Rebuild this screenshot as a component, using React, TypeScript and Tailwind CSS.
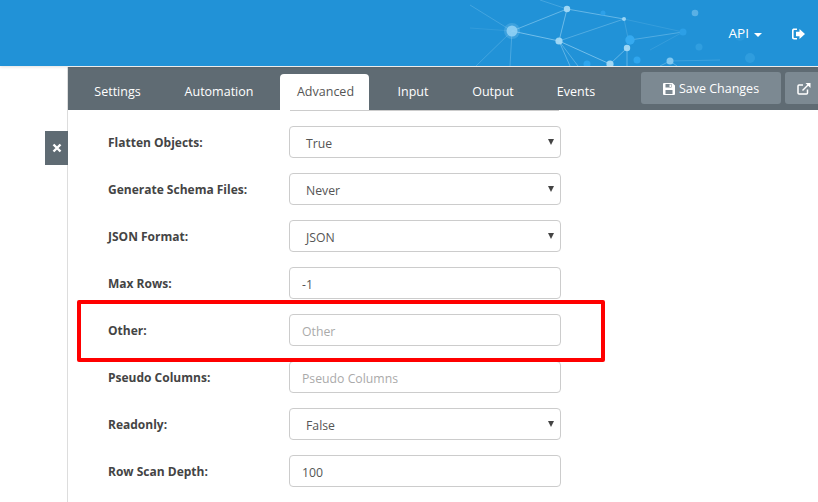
import React from "react";

const font = { fontFamily: '"Open Sans", "Noto Sans", sans-serif' };

function Network() {
  const nodes: [number, number, number, string, number][] = [
    [512, 31, 8, "#8fd0f5", 0.25], [512, 31, 5.5, "#8fd0f5", 0.9], [567, 9, 3.2, "#a5daf6", 0.95], [559, 41, 3.6, "#a5daf6", 0.95],
    [624, 19, 2, "#a5daf6", 0.9], [603, 13, 2.5, "#2fa2ea", 0.9], [683, 32, 3.5, "#2c9fe6", 1],
    [630, 40, 4.7, "#36aaf0", 1], [627, 48, 3.2, "#a5daf6", 0.95], [610, 64, 3.6, "#a5daf6", 0.95],
    [637, 60, 3.5, "#2fa6ee", 1], [670, 61, 3.5, "#8fd0f5", 0.85], [695, 13, 3.3, "#7fc4ee", 0.6],
    [699, 47, 3.5, "#3ea8e6", 0.55], [587, 64, 3.5, "#2fa6ee", 0.95], [750, 58, 5, "#3ea8e6", 0.5],
    [740, 36, 5, "#3ea8e6", 0.3],
  ];
  const lines: [number, number, number, number, number][] = [
    [512, 31, 567, 9, 0.5], [512, 31, 559, 41, 0.6], [567, 9, 559, 41, 0.55], [567, 9, 624, 19, 0.5],
    [559, 41, 624, 19, 0.35], [559, 41, 610, 64, 0.6], [559, 41, 570, 66, 0.45], [559, 41, 578, 66, 0.4],
    [512, 31, 510, 66, 0.3], [512, 31, 476, 66, 0.25], [512, 31, 470, 5, 0.25], [512, 31, 470, 28, 0.12],
    [624, 19, 683, 32, 0.15], [630, 40, 683, 32, 0.35], [627, 48, 610, 64, 0.5], [627, 48, 627, 66, 0.45],
    [624, 19, 628, 38, 0.2], [670, 61, 720, 60, 0.2], [670, 61, 660, 66, 0.35], [670, 61, 677, 66, 0.35],
    [683, 32, 650, 50, 0.15], [540, 0, 567, 9, 0.25],
  ];
  return (
    <svg width="818" height="66" viewBox="0 0 818 66" className="absolute inset-0">
      {lines.map(([a, b, c, d, o], i) => (
        <line key={i} x1={a} y1={b} x2={c} y2={d} stroke="#a8dcf8" strokeWidth="1" opacity={o} />
      ))}
      {nodes.map(([x, y, r, f, o], i) => (
        <circle key={i} cx={x} cy={y} r={r} fill={f} opacity={o} />
      ))}
    </svg>
  );
}

function Caret() {
  return <span className="absolute right-[6px] top-[12px] h-0 w-0 border-x-[3px] border-t-[6px] border-x-transparent border-t-[#444]" />;
}

function Row({ label, value, placeholder, select }: { label: string; value?: string; placeholder?: string; select?: boolean }) {
  return (
    <div className="flex h-[32px] items-center">
      <div className="w-[181px] pt-[2px] text-[12px] font-bold text-[#444]">{label}</div>
      <div className={`relative flex h-[32px] w-[272px] items-center rounded-[4px] border border-[#ccc] bg-white pt-[4px] text-[12.25px] ${select ? "pl-[16px]" : "pl-[12px]"} ${placeholder ? "text-[#aaa]" : "text-[#555]"}`}>
        {value ?? placeholder}
        {select && <Caret />}
      </div>
    </div>
  );
}

export default function App() {
  const tabs = [
    ["Settings", "w-[79px]"],
    ["Automation", "w-[100px]"],
    ["Advanced", "w-[89px]"],
    ["Input", "w-[62px]"],
    ["Output", "w-[74px]"],
    ["Events", "w-[68px]"],
  ];
  return (
    <div className="relative h-[502px] w-[818px] overflow-hidden bg-white" style={font}>
      <header className="relative flex h-[66px] items-center justify-end bg-[#2192d7] pr-[13px] text-white shadow-[0_1px_3px_rgba(0,0,0,0.12)]">
        <Network />
        <div className="relative flex items-center gap-[30px] pt-[1px]">
          <span className="flex items-center gap-[5px] text-[13.5px]">
            API
            <span className="mt-[2px] h-0 w-0 border-x-[4px] border-t-[4px] border-x-transparent border-t-white" />
          </span>
          <svg width="13" height="12" viewBox="0 0 13 12" fill="white">
            <path d="M0 2.2C0 1 1 .5 2 .5h3v1.6H2.3c-.5 0-.7.2-.7.7v6.4c0 .5.2.7.7.7H5v1.6H2c-1 0-2-.5-2-1.7z" />
            <path d="M4 3.8h3.5V1L13 6l-5.5 5V8.2H4z" />
          </svg>
        </div>
      </header>
      <div className="flex h-[436px] pt-px">
        <div className="flex w-[67px] shrink-0 justify-end pt-[64px]">
          <div className="-mr-px relative flex h-[34px] w-[23px] shrink-0 items-center justify-center bg-[#5f6b73]">
            <svg width="10" height="10" viewBox="0 0 10 10" stroke="white" strokeWidth="2.4">
              <path d="M1.5 1.5l7 7M8.5 1.5l-7 7" />
            </svg>
          </div>
        </div>
        <main className="min-w-0 flex-1 border-l border-[#ddd]">
          <div className="flex h-[43px] w-[750px] items-end justify-between bg-[#5f6b73] pl-[9px]">
            <nav className="flex h-[36px] gap-[12px] text-[12.5px] text-white">
              {tabs.map(([t, w]) => (
                <div
                  key={t}
                  className={`flex h-[36px] items-center justify-center pl-[2px] pt-[1px] ${w} ${t === "Advanced" ? "rounded-t-[4px] bg-white text-[#555]" : ""}`}
                >
                  {t}
                </div>
              ))}
            </nav>
            <div className="mb-[6px] flex w-[177px] shrink-0 gap-[4px] text-[12.5px] text-white">
              <div className="flex h-[32px] w-[140px] shrink-0 items-center justify-center gap-[4px] rounded-[3px] bg-[#7c8992] pt-[2px]">
                <svg width="12" height="12" viewBox="0 0 12 12" fill="white">
                  <path fillRule="evenodd" d="M1 0h8.5L12 2.5V11a1 1 0 0 1-1 1H1a1 1 0 0 1-1-1V1a1 1 0 0 1 1-1zm1.5 1v3.5h6V1zM2.5 7v4h7V7zM6.5 1.5H8v2.5H6.5z" />
                </svg>
                Save Changes
              </div>
              <div className="flex h-[32px] w-[40px] shrink-0 items-center rounded-[3px] bg-[#7c8992] pl-[12px]">
                <svg width="14" height="13" viewBox="0 0 14 13" fill="none" stroke="white" strokeWidth="1.5">
                  <path d="M10.5 7.5V11a1 1 0 0 1-1 1H2a1 1 0 0 1-1-1V4a1 1 0 0 1 1-1h4" />
                  <path d="M5.5 8.5L12.5 1.5" />
                  <path d="M8.5 1h5v5z" fill="white" stroke="none" />
                </svg>
              </div>
            </div>
          </div>
          <div className="ml-[222px] h-px w-[269px] bg-[#ccc]" />
          <div className="flex flex-col gap-[15px] pl-[40px] pt-[15px]">
            <Row label="Flatten Objects:" value="True" select />
            <Row label="Generate Schema Files:" value="Never" select />
            <Row label="JSON Format:" value="JSON" select />
            <Row label="Max Rows:" value="-1" />
            <Row label="Other:" placeholder="Other" />
            <Row label="Pseudo Columns:" placeholder="Pseudo Columns" />
            <Row label="Readonly:" value="False" select />
            <Row label="Row Scan Depth:" value="100" />
          </div>
        </main>
      </div>
      <div className="pointer-events-none absolute left-[77px] top-[300px] h-[62px] w-[528px] rounded-[2px] border-[4px] border-[#ff0000]" />
    </div>
  );
}
